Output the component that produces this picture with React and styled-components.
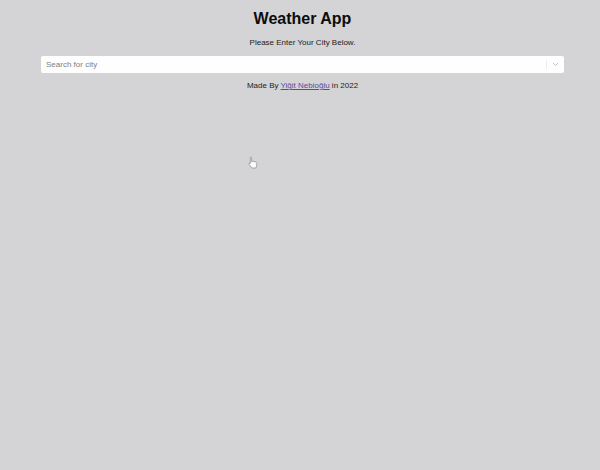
import React from "react";
import styled, { createGlobalStyle } from "styled-components";

const GlobalStyle = createGlobalStyle`
  html, body {
    margin: 0;
    padding: 0;
    background: #d4d3d5;
    font-family: "Liberation Sans", Arial, sans-serif;
  }
`;

const Page = styled.div`
  min-height: 470px;
  display: flex;
  flex-direction: column;
  align-items: center;
  padding: 9px 36px 0 41px;
  box-sizing: border-box;
  position: relative;
`;

const Title = styled.h1`
  margin: 0;
  font-size: 16px;
  font-weight: 700;
  color: #0c0c0c;
  line-height: 19px;
`;

const Subtitle = styled.p`
  margin: 10px 0 0;
  font-size: 8px;
  color: #1c1c1c;
  line-height: 10px;
`;

const SearchBox = styled.div`
  margin-top: 8px;
  width: 100%;
  height: 17px;
  background: #fefefe;
  border-radius: 2px;
  display: flex;
  align-items: center;
  box-sizing: border-box;
`;

const SearchInput = styled.input`
  flex: 1;
  border: none;
  outline: none;
  background: transparent;
  font-family: "Liberation Sans", Arial, sans-serif;
  font-size: 8px;
  padding: 0 0 0 5px;
  color: #333;

  &::placeholder {
    color: #7d7d7d;
  }
`;

const Separator = styled.span`
  width: 1px;
  height: 9px;
  background: #ececec;
`;

const Indicator = styled.span`
  width: 17px;
  display: flex;
  align-items: center;
  justify-content: center;
`;

const Footer = styled.p`
  margin: 8px 0 0;
  font-size: 8px;
  color: #1c1c1c;
  line-height: 10px;
`;

const Link = styled.a`
  color: #5a4b9c;
  text-decoration: underline;
`;

const Cursor = styled.svg`
  position: absolute;
  left: 248px;
  top: 156px;
`;

const App = () => {
  return (
    <>
      <GlobalStyle />
      <Page>
        <Title>Weather App</Title>
        <Subtitle>Please Enter Your City Below.</Subtitle>
        <SearchBox>
          <SearchInput placeholder="Search for city" />
          <Separator />
          <Indicator>
            <svg width="7" height="5" viewBox="0 0 7 5">
              <path d="M1 1 L3.5 3.5 L6 1" fill="none" stroke="#c4c4c4" strokeWidth="1" />
            </svg>
          </Indicator>
        </SearchBox>
        <Footer>
          Made By <Link href="#">Yiğit Nebioğlu</Link> in 2022
        </Footer>
        <Cursor width="10" height="13" viewBox="0 0 10 13">
          <path
            d="M2.5 1 C3.3 1 3.6 1.4 3.6 2 L3.6 5.5 L5 5.3 L8 6 C8.8 6.2 9 6.8 8.9 7.6 L8.4 10.5 L7.8 12 L3.8 12 L1 8.3 C0.6 7.7 1 7 1.7 7.2 L2.3 7.6 L2.3 2 C2.3 1.4 2 1 2.5 1 Z"
            fill="#fafafa"
            stroke="#8a8a8a"
            strokeWidth="0.7"
          />
        </Cursor>
      </Page>
    </>
  );
};

export default App;
